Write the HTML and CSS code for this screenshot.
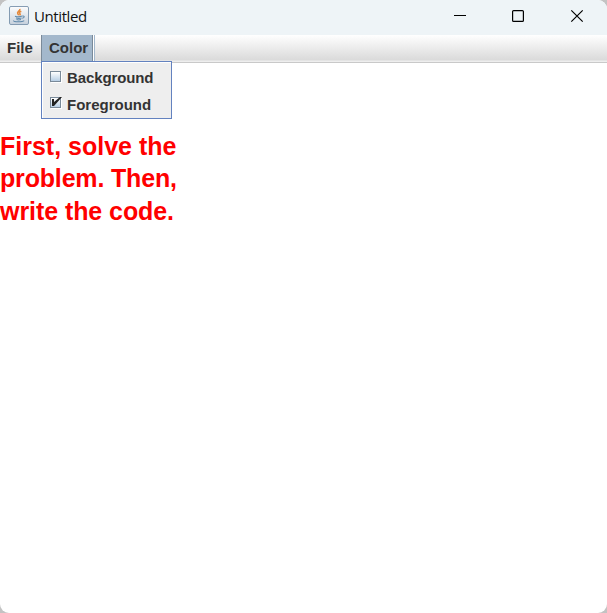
FILE: index.html
```html
<!DOCTYPE html>
<html lang="en">
<head>
<meta charset="utf-8">
<title>Untitled</title>
<link rel="stylesheet" href="styles.css">
</head>
<body>
<div class="window">
  <header class="titlebar">
    <svg class="app-icon" width="20" height="19" viewBox="0 0 20 20" preserveAspectRatio="none">
      <defs>
        <linearGradient id="tile" x1="0" y1="0" x2="0" y2="1">
          <stop offset="0" stop-color="#fdfdfd"/><stop offset="1" stop-color="#c5d0dc"/>
        </linearGradient>
      </defs>
      <rect x=".5" y=".5" width="19" height="19" rx="1.5" fill="url(#tile)" stroke="#7f98b0"/>
      <path d="M10.900 3c.6 2-3.300 3-2.200 5 .3.700 1 1.100.9 1.800M12.300 5.500c-2.300 1-2.300 1.700-1.300 2.700.5.500.2 1.100-.4 1.600" fill="none" stroke="#e58a3c" stroke-width="1.500"/>
      <path d="M6 10.700c2 .7 5.500.6 7.300-.1M7 12.600c1.600.5 4 .5 5.600 0M7.500 14.300c1.300.4 3.100.4 4.500 0M13.500 10.600c2.300-.6 2.300 1.800-.3 2.400M4.700 15.300c-.8 1.700 8.700 1.700 10.500.1" fill="none" stroke="#5f88aa" stroke-width="1.100"/>
    </svg>
    <span class="title">Untitled</span>
    <div class="controls">
      <svg width="58" height="35" viewBox="0 0 58 35"><path d="M23 15.500h12" stroke="#000"/></svg>
      <svg width="58" height="35" viewBox="0 0 58 35"><rect x="23.600" y="10.600" width="10.800" height="10.800" rx="1" fill="none" stroke="#000" stroke-width="1.200"/></svg>
      <svg width="60" height="35" viewBox="0 0 60 35"><path d="M24.300 10.300l11.400 11.400M35.700 10.300l-11.400 11.400" stroke="#000" stroke-width="1.200"/></svg>
    </div>
  </header>
  <nav class="menubar">
    <div class="menu">File</div>
    <div class="menu menu-open">Color
      <div class="popup">
        <div class="item item-background"><span class="check"></span>Background</div>
        <div class="item"><span class="check"><svg class="tick" width="12" height="10" viewBox="0 0 12 10"><path d="M1 2h2v3L9 0h2L3 9H1z" fill="#222"/></svg></span>Foreground</div>
      </div>
    </div>
  </nav>
  <main class="editor">
    <div class="line">First, solve the</div>
    <div class="line line-second">problem. Then,</div>
    <div class="line line-third">write the code.</div>
  </main>
</div>
</body>
</html>
```
FILE: styles.css
```css
html {
  height: 100%;
  background: #c3c3c3;
}
body {
  margin: 0;
  height: 100%;
  overflow: hidden;
  font-family: "Liberation Sans", Arial, sans-serif;
}
.window {
  height: 100%;
  display: flex;
  flex-direction: column;
  background: #fff;
  border-radius: 9px;
}
.titlebar {
  height: 35px;
  flex: none;
  display: flex;
  box-sizing: border-box;
  padding-left: 9px;
  background: #eef4f7;
  border-radius: 9px 9px 0 0;
}
.app-icon {
  margin-top: 6px;
}
.title {
  margin-left: 5px;
  font: 15px/33px "Open Sans", sans-serif;
  letter-spacing: -0.4px;
  color: #111;
}
.controls {
  display: flex;
  margin-left: auto;
}
.menubar {
  height: 28px;
  flex: none;
  display: flex;
  box-sizing: border-box;
  border-bottom: 1px solid #c9c9c9;
  background: linear-gradient(#fff, #dadada 25px, #eee 26px);
  font-weight: bold;
  font-size: 15px;
  line-height: 26px;
  color: #333;
}
.menu {
  position: relative;
  box-sizing: border-box;
  width: 41px;
  padding-left: 7px;
}
.menu-open {
  width: 54px;
  height: 26px;
  border-left: 1px solid #7a8a99;
  border-right: 1px solid #a3b8cc;
  background: #a3b8cc;
  box-shadow: inset -1px 0 #fff, inset -2px 0 #7a8a99;
}
.popup {
  position: absolute;
  left: -1px;
  top: 26px;
  width: 131px;
  height: 58px;
  box-sizing: border-box;
  padding: 2px 0 0 8px;
  border: 1px solid #6382bf;
  background: #eee;
  box-shadow: inset 1px 1px #fff;
}
.item {
  height: 27px;
  display: flex;
  line-height: 28px;
}
.item-background {
  letter-spacing: -0.12px;
}
.check {
  position: relative;
  box-sizing: border-box;
  width: 11px;
  height: 11px;
  margin: 7px 6px 0 0;
  border: 1px solid #7a8a99;
  background: linear-gradient(#fff, #b8cfe5);
  box-shadow: 1px 1px #fff;
}
.item + .item .check {
  margin-top: 6px;
}
.tick {
  position: absolute;
  left: 0;
  top: -1px;
}
.editor {
  flex: 1;
  padding-top: 67px;
  font-weight: bold;
  font-size: 25px;
  color: #f00;
}
.line {
  height: 32px;
  line-height: 32px;
}
.line-second {
  height: 33px;
  letter-spacing: -0.17px;
}
.line-third {
  letter-spacing: -0.07px;
}
```
